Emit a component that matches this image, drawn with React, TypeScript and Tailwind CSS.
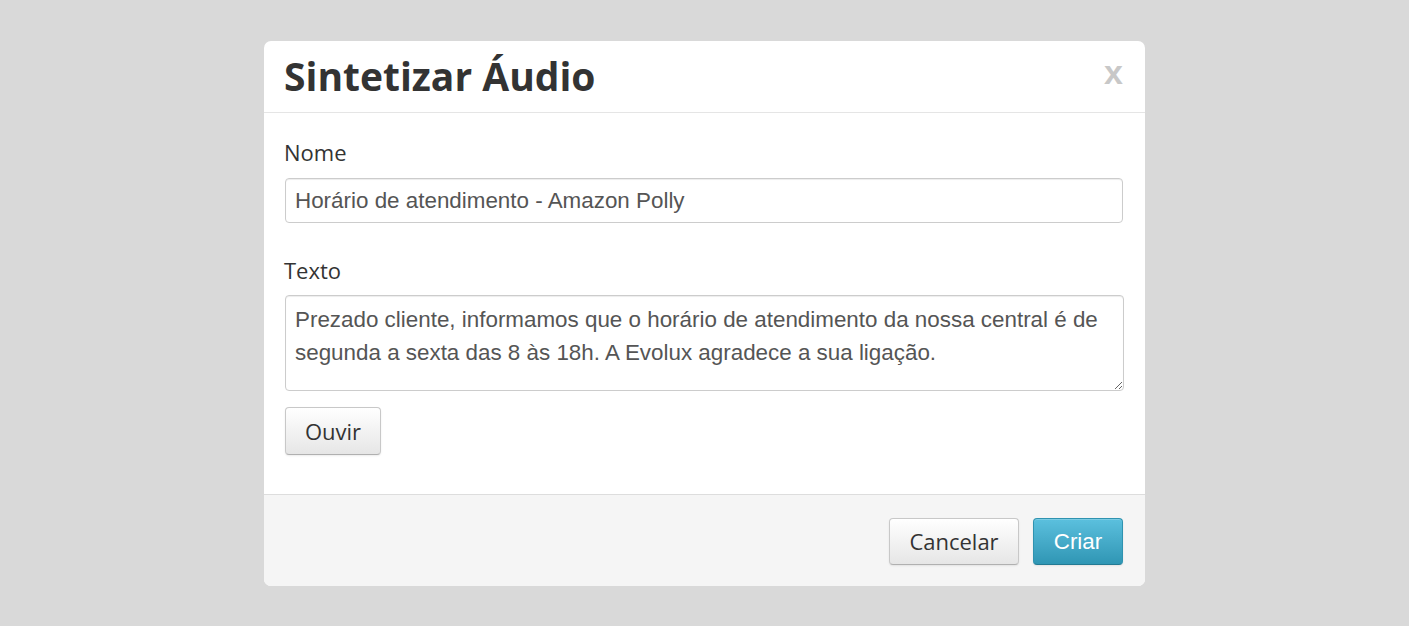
import React from "react";

export default function App() {
  return (
    <div className="w-full h-[626px] bg-[#d9d9d9] flex justify-center pt-[41px]" style={{ fontFamily: '"Open Sans", sans-serif' }}>
      <div className="w-[881px] h-[545px] bg-white rounded-[7px] flex flex-col overflow-hidden">
        <div className="h-[72px] flex items-center justify-between pl-[20px] pr-[22px] border-b border-[#e5e5e5] shrink-0">
          <h3 className="text-[39px] leading-[48px] font-bold text-[#333] font-['Open_Sans',sans-serif] mt-[-2px]">Sintetizar Áudio</h3>
          <button className="text-[34px] leading-none font-bold text-[#c8c8c8] font-['Liberation_Sans',Arial,sans-serif] mb-[10px]">x</button>
        </div>
        <div className="flex-1 flex flex-col pl-[20px] pr-[21px] pt-[24px]">
          <label className="text-[22px] leading-[30px] text-[#333] font-['Open_Sans',sans-serif]">Nome</label>
          <input
            className="ml-[1px] mt-[11px] h-[45px] w-[838px] border border-[#cccccc] rounded-[4px] px-[9px] text-[22.4px] text-[#555] font-['Liberation_Sans',Arial,sans-serif] shadow-[inset_0_1px_1px_rgba(0,0,0,0.075)] outline-none"
            defaultValue="Horário de atendimento - Amazon Polly"
          />
          <label className="mt-[32px] text-[22px] leading-[30px] text-[#333] font-['Open_Sans',sans-serif]">Texto</label>
          <textarea
            className="ml-[1px] mt-[10px] h-[96px] w-[839px] border border-[#cccccc] rounded-[4px] px-[9px] pt-[7px] text-[22.4px] leading-[33px] text-[#555] font-['Liberation_Sans',Arial,sans-serif] shadow-[inset_0_1px_1px_rgba(0,0,0,0.075)] outline-none"
            defaultValue="Prezado cliente, informamos que o horário de atendimento da nossa central é de segunda a sexta das 8 às 18h. A Evolux agradece a sua ligação."
          />
          <div className="mt-[16px] ml-[1px]">
            <button className="h-[48px] w-[96px] rounded-[4px] border border-[#c8c8c8] border-b-[#b0b0b0] bg-gradient-to-b from-white to-[#e6e6e6] text-[22px] text-[#333] font-['Open_Sans',sans-serif] shadow-[inset_0_1px_0_rgba(255,255,255,0.2),0_1px_2px_rgba(0,0,0,0.08)]">
              Ouvir
            </button>
          </div>
        </div>
        <div className="h-[92px] shrink-0 bg-[#f5f5f5] border-t border-[#dddddd] flex justify-end items-start pt-[23px] pr-[22px] gap-[14px]">
          <button className="h-[47px] w-[130px] rounded-[4px] border border-[#c8c8c8] border-b-[#b0b0b0] bg-gradient-to-b from-white to-[#e6e6e6] text-[22px] text-[#333] font-['Open_Sans',sans-serif] shadow-[inset_0_1px_0_rgba(255,255,255,0.2),0_1px_2px_rgba(0,0,0,0.08)]">
            Cancelar
          </button>
          <button className="h-[47px] w-[90px] rounded-[4px] border border-[#2f93b0] border-b-[#237a93] bg-gradient-to-b from-[#5bc0de] to-[#2f96b4] text-[22.4px] text-white font-['Liberation_Sans',Arial,sans-serif] shadow-[inset_0_1px_0_rgba(255,255,255,0.2),0_1px_2px_rgba(0,0,0,0.08)]">
            Criar
          </button>
        </div>
      </div>
    </div>
  );
}
